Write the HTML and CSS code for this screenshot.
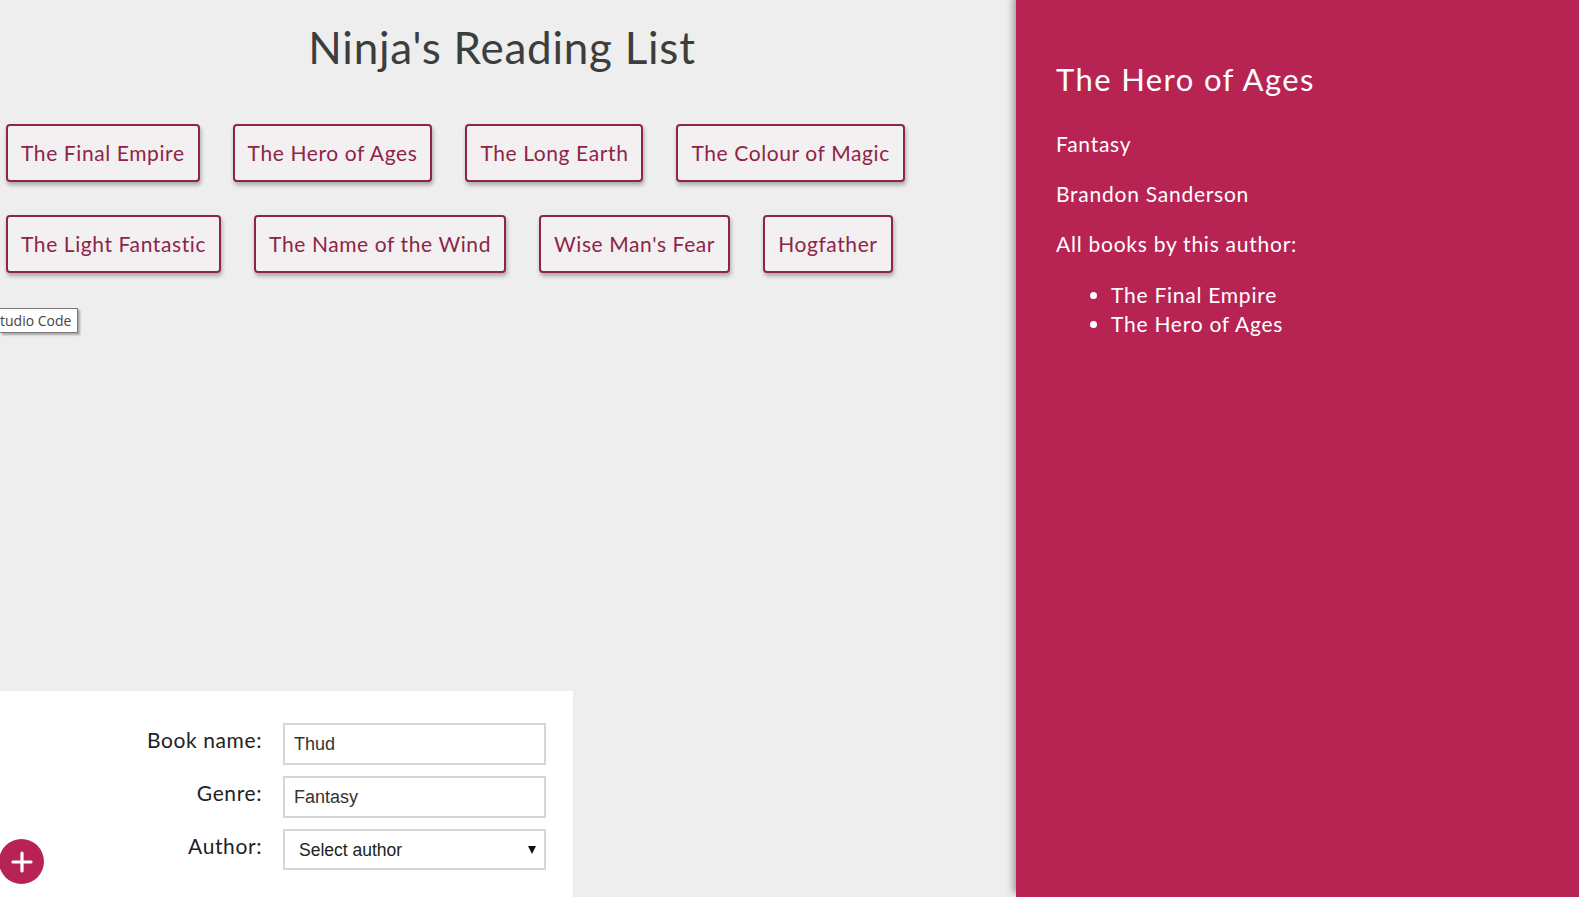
FILE: index.html
```html
<!DOCTYPE html>
<html lang="en">
<head>
<meta charset="utf-8">
<title>Ninja's Reading List</title>
<link rel="stylesheet" href="styles.css">
</head>
<body>
<div class="app">
  <main class="main">
    <h1 class="title">Ninja's Reading List</h1>
    <ul class="book-list">
      <li class="book">The Final Empire</li>
      <li class="book">The Hero of Ages</li>
      <li class="book">The Long Earth</li>
      <li class="book">The Colour of Magic</li>
      <li class="book">The Light Fantastic</li>
      <li class="book">The Name of the Wind</li>
      <li class="book">Wise Man's Fear</li>
      <li class="book">Hogfather</li>
    </ul>
    <div class="tooltip">tudio Code</div>
    <form class="add-book">
      <div class="field">
        <label class="field-label">Book name:</label>
        <input class="field-input" type="text" value="Thud">
      </div>
      <div class="field">
        <label class="field-label">Genre:</label>
        <input class="field-input" type="text" value="Fantasy">
      </div>
      <div class="field">
        <label class="field-label">Author:</label>
        <div class="select-wrap">
          <select class="field-select">
            <option>Select author</option>
          </select>
        </div>
      </div>
      <button class="add-btn" type="button" aria-label="Add book">
        <svg width="22" height="22" viewBox="0 0 22 22"><path d="M11 2v18M2 11h18" stroke="#fff" stroke-width="3.2" stroke-linecap="round"/></svg>
      </button>
    </form>
  </main>
  <aside class="details">
    <h2 class="details-title">The Hero of Ages</h2>
    <p class="details-text details-first">Fantasy</p>
    <p class="details-text">Brandon Sanderson</p>
    <p class="details-text">All books by this author:</p>
    <ul class="author-books">
      <li>The Final Empire</li>
      <li>The Hero of Ages</li>
    </ul>
  </aside>
</div>
</body>
</html>
```
FILE: styles.css
```css
* { box-sizing: border-box; }

html, body {
  margin: 0;
  padding: 0;
  height: 100%;
}

body {
  background: #eeeeee;
  font-family: "Lato", "Noto Sans", sans-serif;
  overflow: hidden;
}

.app {
  display: flex;
  height: 897px;
}

.main {
  position: relative;
  width: 1016px;
  flex: none;
  display: flex;
  flex-direction: column;
}

.title {
  margin: 20px 0 0;
  padding-right: 12px;
  text-align: center;
  font-size: 44px;
  font-weight: 400;
  line-height: 54px;
  letter-spacing: 0.75px;
  color: #3d3d3d;
}

.book-list {
  list-style: none;
  margin: 50px 0 0;
  padding: 0 0 0 6px;
  display: flex;
  flex-wrap: wrap;
  column-gap: 33px;
  row-gap: 33px;
  width: 960px;
}

.book {
  padding: 13px 13px;
  border: 2px solid #8e2448;
  border-radius: 4px;
  background: #f3f0f1;
  box-shadow: 1px 3px 4px rgba(0, 0, 0, 0.3);
  color: #8e2448;
  font-size: 21px;
  line-height: 28px;
  letter-spacing: 0.6px;
  white-space: nowrap;
}

.tooltip {
  position: absolute;
  left: 0;
  top: 308px;
  width: 78px;
  height: 25px;
  padding: 2px 0 0 0;
  background: #fff;
  border: 1px solid #7a7a7a;
  border-left: none;
  box-shadow: 2px 2px 2px rgba(0, 0, 0, 0.3);
  font-family: "Open Sans", "Noto Sans", sans-serif;
  font-size: 14px;
  line-height: 19px;
  color: #444;
  overflow: hidden;
  white-space: nowrap;
}

.add-book {
  position: relative;
  margin-top: auto;
  width: 573px;
  height: 206px;
  background: #fff;
  padding: 32px 0 0 0;
  display: flex;
  flex-direction: column;
  gap: 11px;
}

.field {
  display: grid;
  grid-template-columns: 262px 263px;
  column-gap: 21px;
  align-items: start;
}

.field-label {
  text-align: right;
  padding-top: 4px;
  font-size: 21px;
  line-height: 26px;
  letter-spacing: 0.6px;
  color: #222;
}

.field-input,
.field-select {
  width: 263px;
  height: 42px;
  margin: 0;
  border: 2px solid #d6d6d6;
  border-radius: 0;
  background: #fff;
  font-family: "Liberation Sans", Arial, sans-serif;
  font-size: 18px;
  color: #333;
  padding: 0 9px;
  outline: none;
}

.select-wrap {
  position: relative;
  width: 263px;
}

.field-select {
  appearance: none;
  -webkit-appearance: none;
  padding: 0 14px;
  font-size: 17.5px;
  color: #222;
  height: 41px;
}

.select-wrap::after {
  content: "";
  position: absolute;
  right: 10px;
  top: 17px;
  border-left: 4px solid transparent;
  border-right: 4px solid transparent;
  border-top: 8px solid #111;
  pointer-events: none;
}

.add-btn {
  position: absolute;
  left: -1px;
  bottom: 13px;
  width: 45px;
  height: 45px;
  border: 0;
  border-radius: 50%;
  background: #b72454;
  display: flex;
  align-items: center;
  justify-content: center;
  padding: 0;
  cursor: pointer;
}

.details {
  flex: 1;
  position: relative;
  background: #b72454;
  color: #fff;
  padding: 40px 40px;
  box-shadow: -3px -4px 7px rgba(0, 0, 0, 0.35);
  letter-spacing: 0.75px;
}

.details-title {
  margin: 19px 0 0;
  font-size: 31px;
  font-weight: 400;
  line-height: 40px;
  letter-spacing: 1.4px;
}

.details-text {
  margin: 21px 0 0;
  font-size: 21px;
  line-height: 29px;
}

.details-first {
  margin-top: 30px;
}

.author-books {
  margin: 22px 0 0;
  padding-left: 55px;
  font-size: 21px;
  line-height: 29px;
}
```
